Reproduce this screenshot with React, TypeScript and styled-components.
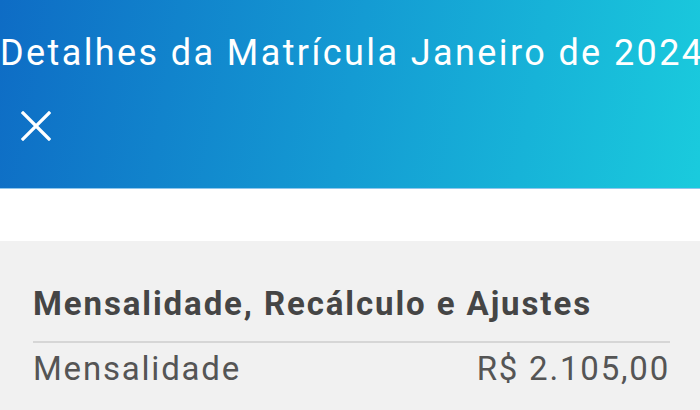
import { FC } from "react";
import styled, { createGlobalStyle } from "styled-components";

const GlobalStyle = createGlobalStyle`
   html, body {
      margin: 0;
      padding: 0;
      background: #ffffff;
      font-family: Roboto, "Noto Sans", sans-serif;
   }
   * {
      box-sizing: border-box;
   }
`;

const Page = styled.div`
   width: 700px;
   height: 410px;
   overflow: hidden;
   display: flex;
   flex-direction: column;
`;

const Header = styled.header`
   height: 189px;
   flex-shrink: 0;
   background: linear-gradient(100deg, #0e6cc5 0%, #149bd3 50%, #1acbdd 100%);
   border-bottom: 1px solid #8fc6ec;
   display: flex;
   flex-direction: column;
   padding-top: 35px;
   overflow: hidden;
`;

const Title = styled.h1`
   margin: 0;
   font-size: 36px;
   line-height: 1;
   font-weight: 400;
   letter-spacing: 2.4px;
   color: #ffffff;
   white-space: nowrap;
`;

const CloseButton = styled.button`
   all: unset;
   cursor: pointer;
   width: 36px;
   height: 36px;
   margin: 37px 0 0 18px;
   display: flex;
   align-items: center;
   justify-content: center;
`;

const Spacer = styled.div`
   height: 52px;
   flex-shrink: 0;
`;

const Panel = styled.section`
   flex: 1;
   background: #f1f1f1;
   padding: 46px 30px 0 33px;
`;

const SectionTitle = styled.h2`
   margin: 0;
   font-size: 33px;
   line-height: 1;
   font-weight: 700;
   letter-spacing: 1.9px;
   color: #454545;
   white-space: nowrap;
`;

const Divider = styled.hr`
   margin: 21px 0 0;
   border: none;
   height: 2px;
   background: #d6d6d6;
`;

const Row = styled.div`
   margin-top: 9px;
   display: flex;
   justify-content: space-between;
   align-items: baseline;
`;

const RowText = styled.span`
   font-size: 33px;
   line-height: 1;
   font-weight: 400;
   letter-spacing: 1.8px;
   color: #555555;
`;

const CloseIcon: FC = () => (
   <svg width="30" height="30" viewBox="0 0 30 30">
      <path
         d="M2 2 L28 28 M28 2 L2 28"
         stroke="#ffffff"
         strokeWidth="3.2"
         strokeLinecap="square"
         fill="none"
      />
   </svg>
);

export default function App() {
   return (
      <Page>
         <GlobalStyle />
         <Header>
            <Title>Detalhes da Matrícula Janeiro de 2024</Title>
            <CloseButton aria-label="Fechar">
               <CloseIcon />
            </CloseButton>
         </Header>
         <Spacer />
         <Panel>
            <SectionTitle>Mensalidade, Recálculo e Ajustes</SectionTitle>
            <Divider />
            <Row>
               <RowText>Mensalidade</RowText>
               <RowText>R$ 2.105,00</RowText>
            </Row>
         </Panel>
      </Page>
   );
}
